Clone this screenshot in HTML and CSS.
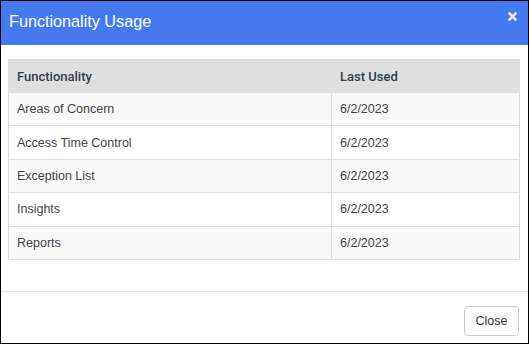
FILE: index.html
```html
<!DOCTYPE html>
<html lang="en">
<head>
  <meta charset="UTF-8">
  <meta name="viewport" content="width=device-width, initial-scale=1.0">
  <title>Functionality Usage</title>
  <link rel="stylesheet" href="styles.css">
</head>
<body>
  <div class="modal">
    <div class="modal-header">
      <h4 class="modal-title">Functionality Usage</h4>
      <button type="button" class="close-x" aria-label="Close">
        <svg width="9" height="9" viewBox="0 0 9 9">
          <path d="M1.5 1.5 L7.5 7.5 M7.5 1.5 L1.5 7.5" stroke="#fff" stroke-width="2.6" stroke-linecap="square"/>
        </svg>
      </button>
    </div>
    <div class="modal-body">
      <table class="usage">
        <thead>
          <tr>
            <th class="col-name">Functionality</th>
            <th>Last Used</th>
          </tr>
        </thead>
        <tbody>
          <tr><td>Areas of Concern</td><td>6/2/2023</td></tr>
          <tr><td>Access Time Control</td><td>6/2/2023</td></tr>
          <tr><td>Exception List</td><td>6/2/2023</td></tr>
          <tr><td>Insights</td><td>6/2/2023</td></tr>
          <tr><td>Reports</td><td>6/2/2023</td></tr>
        </tbody>
      </table>
    </div>
    <div class="modal-footer">
      <button type="button" class="btn">Close</button>
    </div>
  </div>
</body>
</html>
```

FILE: styles.css
```css
* {
    box-sizing: border-box;
}
body {
    margin: 0;
    font-family: 'Liberation Sans', Arial, sans-serif;
    font-size: 12.5px;
    color: #333;
    background: #fff;
}
.modal {
    width: 529px;
    height: 344px;
    border: 1px solid #000;
    display: flex;
    flex-direction: column;
}
.modal-header {
    height: 44px;
    background: #4479f0;
    display: flex;
    align-items: center;
    justify-content: space-between;
    padding: 0 11px 3px 8px;
}
.modal-title {
    margin: 0;
    font-size: 16.2px;
    font-weight: normal;
    color: #fff;
}
.close-x {
    align-self: flex-start;
    margin-top: 11px;
    border: none;
    background: none;
    padding: 0;
    opacity: 0.85;
    display: flex;
    cursor: pointer;
}
.modal-body {
    flex: 1;
    padding: 14px 8px 0 7px;
}
.usage {
    width: 100%;
    border-collapse: collapse;
    border: 1px solid #ddd;
}
.usage th,
.usage td {
    height: 33.4px;
    padding: 0 8px;
    text-align: left;
    vertical-align: middle;
    border: 1px solid #ddd;
}
.usage th {
    height: 33px;
    background: #dfdfdf;
    font-family: Roboto, 'Liberation Sans', sans-serif;
    font-weight: 500;
    font-size: 13px;
    color: #35404e;
}
.usage .col-name {
    width: 323px;
}
.usage td {
    color: #444;
}
.usage tbody tr:nth-child(odd) {
    background: #f9f9f9;
}
.modal-footer {
    border-top: 1px solid #e5e5e5;
    padding: 14px 9px 7px;
    display: flex;
    justify-content: flex-end;
}
.btn {
    height: 30px;
    width: 55px;
    background: #fff;
    border: 1px solid #ccc;
    border-radius: 4px;
    font-family: 'Liberation Sans', Arial, sans-serif;
    font-size: 12.5px;
    color: #333;
    cursor: pointer;
}
```
